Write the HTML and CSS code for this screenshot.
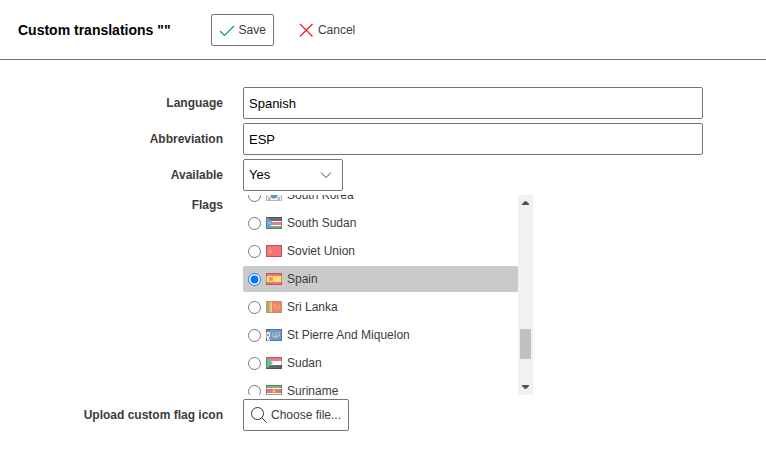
FILE: index.html
```html
<!DOCTYPE html>
<html lang="en">
<head>
<meta charset="utf-8">
<title>Custom translations</title>
<link rel="stylesheet" href="styles.css">
</head>
<body>
<header class="toolbar">
  <h1 class="title">Custom translations ""</h1>
  <button type="button" class="btn">
    <svg class="icon" viewBox="0 0 16 16"><path d="M1 9 5.500 13.500 15 4" fill="none" stroke="#109c50" stroke-width="1.200"/></svg>
    Save
  </button>
  <button type="button" class="btn btn-plain">
    <svg class="icon" viewBox="0 0 16 16"><path d="M2 2 14.500 14.500M14.500 2 2 14.500" fill="none" stroke="#e81c24" stroke-width="1.200"/></svg>
    Cancel
  </button>
</header>
<form class="form">
  <label class="label" for="language">Language</label>
  <input class="field" id="language" type="text" value="Spanish">
  <label class="label" for="abbr">Abbreviation</label>
  <input class="field" id="abbr" type="text" value="ESP">
  <label class="label" for="available">Available</label>
  <div class="select-wrap">
    <select class="field field-select" id="available"><option>Yes</option><option>No</option></select>
    <svg class="chevron" viewBox="0 0 12 12"><path d="M1 3.500 6 8.500 11 3.500" fill="none" stroke="#444" stroke-width="1"/></svg>
  </div>
  <span class="label label-top" id="flags-label">Flags</span>
  <div class="flags" role="radiogroup" aria-labelledby="flags-label">
    <div class="viewport">
      <div class="list">
        <label class="option"><input type="radio" name="flag">
          <svg class="flag" viewBox="0 0 16 12"><path fill="#f4f4f4" d="M0 0h16v12H0z"/><path fill="#f08088" d="M4.500 6a3.500 3.500 0 0 1 7 0z"/><path fill="#6090dc" d="M4.500 6a3.500 3.500 0 0 0 7 0z"/><path d="m2 2 2-1M12 1l2 1M2 8l3 2M2 10l2 1M14 8l-3 2M14 10l-2 1" stroke="#999" stroke-width="1"/><path class="edge" d="M.5.5h15v11H.5z"/></svg>
          South Korea</label>
        <label class="option"><input type="radio" name="flag">
          <svg class="flag" viewBox="0 0 16 12"><path fill="#6c6c6c" d="M0 0h16v4H0z"/><path fill="#fff" d="M0 4h16v5H0z"/><path fill="#f07880" d="M0 5h16v3H0z"/><path fill="#68b07c" d="M0 9h16v3H0z"/><path fill="#68a4e0" d="m0 0 8 6-8 6z"/><path fill="#f8e880" d="m2 6 2.500-1-.5 1 .5 1z"/><path class="edge" d="M.5.5h15v11H.5z"/></svg>
          South Sudan</label>
        <label class="option"><input type="radio" name="flag">
          <svg class="flag" viewBox="0 0 16 12"><path fill="#f87078" d="M0 0h16v12H0z"/><path d="M4 3v1M3 5l3 3M5 5q1 3-1 3H2" stroke="#fbb060" fill="none"/><path class="edge" d="M.5.5h15v11H.5z"/></svg>
          Soviet Union</label>
        <label class="option option-selected"><input type="radio" name="flag" checked>
          <svg class="flag" viewBox="0 0 16 12"><path fill="#f07478" d="M0 0h16v12H0z"/><path fill="#fcdc70" d="M0 3h16v6H0z"/><path fill="#e8a070" d="M3 4h4v4H3z"/><path fill="#c09890" d="M4 5h2v2H4z"/><path class="edge" d="M.5.5h15v11H.5z"/></svg>
          Spain</label>
        <label class="option"><input type="radio" name="flag">
          <svg class="flag" viewBox="0 0 16 12"><path fill="#f8d070" d="M0 0h16v12H0z"/><path fill="#74bc98" d="M1 1h2v10H1z"/><path fill="#f8a870" d="M3 1h2v10H3z"/><path fill="#f07c78" d="M6 1h9v10H6z"/><path d="M8 3v2h5v4M8 9V6h3v3M8 3h2m3 0v2" stroke="#f8a868" fill="none"/><path class="edge" d="M.5.5h15v11H.5z"/></svg>
          Sri Lanka</label>
        <label class="option"><input type="radio" name="flag">
          <svg class="flag" viewBox="0 0 16 12"><path fill="#689cdc" d="M0 0h16v12H0z"/><path fill="#f0ecec" d="M0 0h4v12H0z"/><path fill="#7088b0" d="M0 0h4v3H0z"/><path fill="#e08080" d="M1 5h2v2H1z"/><path fill="#888" d="M0 9h1v3H0zM3 8h1v2H3z"/><path d="M6 7q4 2 8-1M7 8h6M7 4v2M10 3v4M13 3v3" stroke="#dcc888" fill="none"/><path class="edge" d="M.5.5h15v11H.5z"/></svg>
          St Pierre And Miquelon</label>
        <label class="option"><input type="radio" name="flag">
          <svg class="flag" viewBox="0 0 16 12"><path fill="#f07880" d="M0 0h16v4H0z"/><path fill="#fff" d="M0 4h16v4H0z"/><path fill="#686868" d="M0 8h16v4H0z"/><path fill="#68c088" d="m0 0 7 6-7 6z"/><path class="edge" d="M.5.5h15v11H.5z"/></svg>
          Sudan</label>
        <label class="option"><input type="radio" name="flag">
          <svg class="flag" viewBox="0 0 16 12"><path fill="#68b880" d="M0 0h16v12H0z"/><path fill="#fff" d="M0 3h16v6H0z"/><path fill="#f07078" d="M0 4h16v4H0z"/><path fill="#fcd870" d="m8 4 .6 1.400H10L9 6.400l.4 1.600L8 7l-1.400 1L7 6.400l-1-1h1.400z"/><path class="edge" d="M.5.5h15v11H.5z"/></svg>
          Suriname</label>
      </div>
    </div>
    <div class="scrollbar">
      <svg class="arrow" viewBox="0 0 15 15"><path d="M4 10V9l3-3h1l3 3v1z" fill="#505050"/></svg>
      <div class="track"><div class="thumb"></div></div>
      <svg class="arrow" viewBox="0 0 15 15"><path d="M4 5v1l3 3h1l3-3V5z" fill="#505050"/></svg>
    </div>
  </div>
  <label class="label" for="upload">Upload custom flag icon</label>
  <button type="button" class="btn btn-file" id="upload">
    <svg class="icon" viewBox="0 0 16 16"><path d="M12.500 6.500a6 6 0 1 1-12 0 6 6 0 0 1 12 0M10.800 10.800 15.500 15.500" fill="none" stroke="#333" stroke-width="1"/></svg>
    Choose file...
  </button>
</form>
</body>
</html>
```
FILE: styles.css
```css
* {
  box-sizing: border-box;
}

body {
  margin: 0;
  background: #fff;
  color: #3c3c3c;
  font: 12px/20px "Liberation Sans", Arial, sans-serif;
}

.toolbar {
  display: flex;
  align-items: center;
  height: 60px;
  padding: 0 18px;
  border-bottom: 1px solid #767676;
}

.title {
  margin: 0 40px 0 0;
  color: #000;
  font-size: 14px;
}

.btn {
  display: flex;
  align-items: center;
  gap: 4px;
  height: 32px;
  padding: 0 7px;
  border: 1px solid #767676;
  border-radius: 2px;
  background: #fff;
  color: #3c3c3c;
  font: inherit;
}

.btn-plain {
  margin-left: 16px;
  border-color: transparent;
}

.btn-file {
  justify-self: start;
}

.icon {
  width: 16px;
  height: 16px;
}

.form {
  display: grid;
  grid-template-columns: 205px minmax(0, 1fr);
  column-gap: 20px;
  row-gap: 4px;
  padding: 27px 63px 23px 18px;
}

.label {
  font-weight: bold;
  line-height: 32px;
  text-align: right;
}

.label-top {
  line-height: 20px;
}

.field {
  width: 100%;
  height: 32px;
  padding: 0 5px;
  border: 1px solid #767676;
  border-radius: 2px;
  background: #fff;
  color: #000;
  font: 13px "Liberation Sans", Arial, sans-serif;
  appearance: none;
}

.field-select {
  padding-bottom: 2px;
}

.select-wrap {
  position: relative;
  width: 100px;
  height: 32px;
}

.chevron {
  position: absolute;
  top: 10px;
  right: 11px;
  width: 12px;
  height: 12px;
  pointer-events: none;
}

.flags {
  display: flex;
  width: 290px;
  height: 200px;
}

.viewport {
  flex: 1;
  overflow: hidden;
}

.list {
  display: grid;
  gap: 2px;
  margin-top: -13px;
}

.option {
  display: flex;
  align-items: center;
  gap: 5px;
  height: 26px;
  padding: 0 5px;
  border-radius: 2px;
}

.option input {
  width: 13px;
  height: 13px;
  margin: 0;
}

.option-selected {
  background: #cacaca;
}

.flag {
  width: 16px;
  height: 12px;
}

.edge {
  fill: none;
  stroke: #000;
  stroke-opacity: 0.25;
}

.scrollbar {
  display: flex;
  flex-direction: column;
  width: 15px;
  background: #f1f1f1;
}

.arrow {
  width: 15px;
  height: 15px;
}

.track {
  flex: 1;
  padding: 119px 2px 0;
}

.thumb {
  height: 30px;
  background: #c1c1c1;
}
```
